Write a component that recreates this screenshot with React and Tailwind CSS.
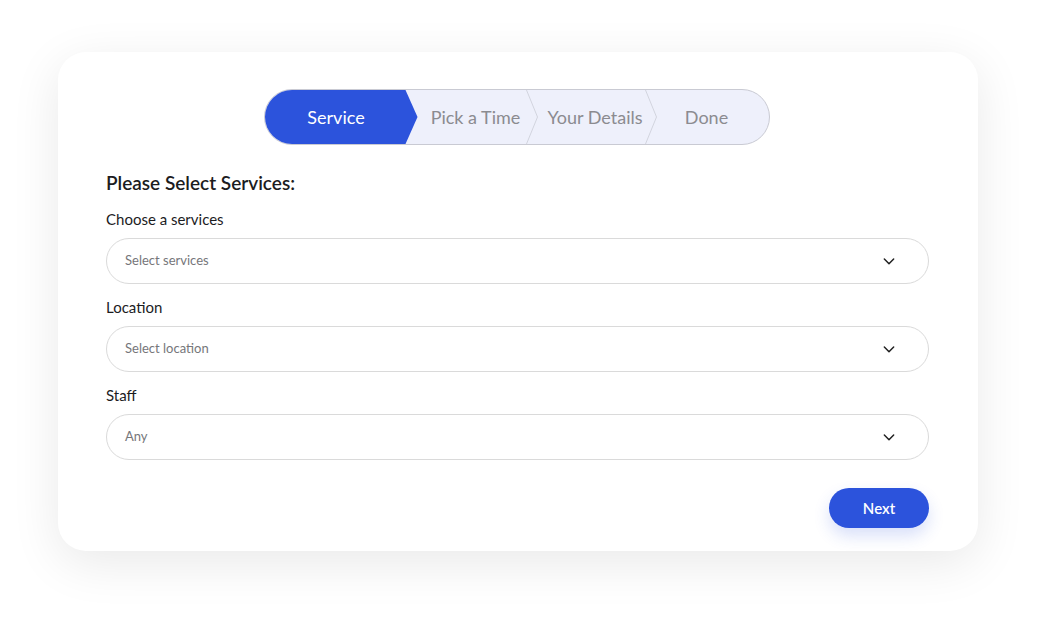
import React from 'react';

const steps = [
  { name: 'Service', width: 'w-[153px]', pad: 'pr-[10px]', active: true },
  { name: 'Pick a Time', width: 'w-[120px]', pad: 'pr-[4px]', sep: true },
  { name: 'Your Details', width: 'w-[119px]', pad: 'pr-[4px]', sep: true },
  { name: 'Done', width: 'w-[112px]', pad: 'pr-[12px]' },
];

const fields = [
  { label: 'Choose a services', placeholder: 'Select services' },
  { label: 'Location', placeholder: 'Select location' },
  { label: 'Staff', placeholder: 'Any' },
];

function Chevron() {
  return (
    <svg width="16" height="16" viewBox="0 0 24 24" fill="none" stroke="#1f1f1f" strokeWidth="2.2" strokeLinecap="round" strokeLinejoin="round">
      <path d="M5 9l7 7 7-7" />
    </svg>
  );
}

function Stepper() {
  return (
    <div className="flex h-[56px] rounded-full border border-[#c9cad3] bg-[#eef0fb] overflow-hidden">
      {steps.map(step => (
        <div
          key={step.name}
          className={`relative h-full flex items-center justify-center shrink-0 text-[18px] ${step.width} ${step.pad} ${
            step.active
              ? 'bg-[#2c53dc] text-white [clip-path:polygon(0_0,calc(100%-12px)_0,100%_50%,calc(100%-12px)_100%,0_100%)]'
              : 'text-[#8b8b90]'
          }`}
        >
          {step.name}
          {step.sep && (
            <svg className="absolute right-0 top-0 h-full w-[12px]" viewBox="0 0 12 54" preserveAspectRatio="none">
              <polyline points="0.5,0 11.5,27 0.5,54" fill="none" stroke="#d2d4de" strokeWidth="1" />
            </svg>
          )}
        </div>
      ))}
    </div>
  );
}

export default function App() {
  return (
    <div className="min-h-[624px] bg-white pt-[52px] pl-[58px] font-['Lato','Noto_Sans',sans-serif]">
      <div className="w-[920px] rounded-[28px] bg-white shadow-[0_12px_50px_rgba(0,0,0,0.09)] pl-[48px] pr-[49px] pt-[37px] pb-[23px]">
        <div className="flex justify-center pr-[2px]">
          <Stepper />
        </div>

        <h2 className="mt-[26px] text-[19px] leading-[24px] font-semibold text-[#1c1c1e]">Please Select Services:</h2>

        <div className="mt-[14px] flex flex-col gap-[13px]">
          {fields.map(field => (
            <div key={field.label}>
              <p className="text-[15px] leading-[20px] text-[#1c1c1e]">{field.label}</p>
              <div className="mt-[9px] h-[46px] rounded-full border border-[#dadada] flex items-center justify-between pl-[18px] pr-[31px]">
                <span className="text-[13px] text-[#76767a]">{field.placeholder}</span>
                <Chevron />
              </div>
            </div>
          ))}
        </div>

        <div className="mt-[28px] flex justify-end">
          <button className="w-[100px] h-[40px] rounded-full bg-[#2c53dc] text-white text-[15px] font-semibold shadow-[0_8px_16px_rgba(44,83,220,0.18)]">
            Next
          </button>
        </div>
      </div>
    </div>
  );
}
